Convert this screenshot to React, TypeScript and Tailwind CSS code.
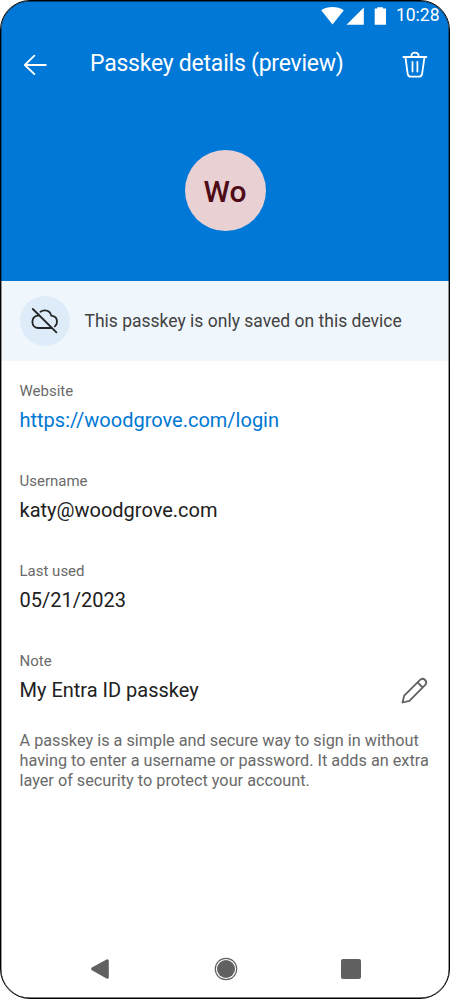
import React from "react";

function Field({ label, value, link }: { label: string; value: string; link?: boolean }) {
  return (
    <div className="h-[90px]">
      <div className="text-[15px] leading-5 text-[#6a6a6a]"><span>{label}</span></div>
      <div className={"mt-[5px] text-[20px] leading-[28px] " + (link ? "text-[#0078d4]" : "text-[#212121]")}>
        <span>{value}</span>
      </div>
    </div>
  );
}

export default function App() {
  return (
    <div className="h-[999px] w-[450px] overflow-hidden bg-white font-['Roboto',sans-serif]">
      <div className="relative flex h-[999px] w-[450px] flex-col overflow-hidden rounded-[30px] border border-black bg-white">
        <header className="h-[280px] shrink-0 bg-[#0078d7] text-white">
          <div className="flex h-[29px] items-center justify-end pr-[9.5px]">
            <svg width="66" height="20" viewBox="321 5 66 20" fill="currentColor" className="mr-[8.5px]">
              <path d="M321.2 9.2C327.5 4.9 337.5 4.9 343.8 9.2L332.5 23.6Z" />
              <path d="M363.8 6.5V23.7H346.5Z" />
              <path d="M374.7 7.6H377.4V6.2H383V7.6H386V23.8H374.7Z" />
            </svg>
            <span className="-mt-px text-[17.5px] leading-5">10:28</span>
          </div>
          <div className="flex h-[70px] items-center pl-[21px] pr-[21px]">
            <svg width="26" height="22" viewBox="22 54 26 22" fill="none" stroke="currentColor" strokeWidth="1.8" strokeLinecap="round" strokeLinejoin="round">
              <path d="M34.4 55.6L24.8 65L34.4 74.2M25 65H45.8" />
            </svg>
            <h1 className="-mt-[2px] ml-[42px] flex-1 whitespace-nowrap text-[23px] leading-7 tracking-[-0.23px]"><span>Passkey details (preview)</span></h1>
            <svg width="26" height="28" viewBox="402 51 26 28" fill="none" stroke="currentColor" strokeWidth="1.8" strokeLinecap="round" strokeLinejoin="round">
              <path d="M403.4 57H426.4M411.3 56.7C411.3 51.3 418.7 51.3 418.7 56.7M405.4 57.2L407.7 73.8Q408.1 76.7 411 76.7H418.8Q421.7 76.7 422.1 73.8L424.5 57.2M412.5 62V71.6M417.4 62V71.6" />
            </svg>
          </div>
          <div className="mx-auto mt-[50px] flex size-[81px] items-center justify-center rounded-full bg-[#e8d0d3] text-[30px] font-medium text-[#4f0c16]">
            <span className="mt-px">Wo</span>
          </div>
        </header>
        <section className="flex h-[80px] shrink-0 items-center bg-[#eff6fc] pl-[18.5px]">
          <div className="flex size-[50px] items-center justify-center rounded-full bg-[#deecf9]">
            <svg width="30" height="30" viewBox="30 306 30 30" fill="none" stroke="#242424" strokeWidth="1.8" strokeLinecap="round" strokeLinejoin="round">
              <path d="M32.8 309L56.4 332.4M37.8 315.7C34.5 316.2 32.4 318.9 32.4 322C32.4 325.5 35 328 38.4 328H51.6M54.8 326.4C56.2 325.3 57 323.7 57 321.8C57 318.4 54.6 316 51.2 315.7C50.6 312.4 48 310.3 44.7 310.3C43.1 310.3 41.7 310.8 40.5 311.7M38.7 314.2Q38.3 314.9 38.1 315.7" />
            </svg>
          </div>
          <p className="ml-[15px] whitespace-nowrap text-[17.5px] leading-6 text-[#424242]"><span>This passkey is only saved on this device</span></p>
        </section>
        <main className="flex flex-1 flex-col pl-[18.5px] pt-[20px]">
          <Field label="Website" value="https://woodgrove.com/login" link />
          <Field label="Username" value="katy@woodgrove.com" />
          <Field label="Last used" value="05/21/2023" />
          <div className="flex h-[80px] items-start justify-between">
            <Field label="Note" value="My Entra ID passkey" />
            <svg width="28" height="28" viewBox="400 676 28 28" className="mr-[21px] mt-[25px]" fill="none" stroke="#616161" strokeWidth="1.8" strokeLinecap="round" strokeLinejoin="round">
              <path d="M402.5 702.5L404.2 695.6L419.8 680.1C423.5 676.7 428.4 681.5 425 685.2L409.4 700.8ZM417.6 682.4L422.7 687.5" />
            </svg>
          </div>
          <p className="whitespace-nowrap text-[16.25px] leading-5 text-[#6a6a6a]">
            <span>A passkey is a simple and secure way to sign in without</span><br />
            <span>having to enter a username or password. It adds an extra</span><br />
            <span>layer of security to protect your account.</span>
          </p>
        </main>
        <nav className="flex h-[58px] shrink-0 items-center pl-[89px]">
          <svg width="19" height="22" viewBox="90 957.5 19 22" fill="#616161" stroke="#616161" strokeWidth="3" strokeLinejoin="round">
            <path d="M92.6 968.4L107.3 960.2V976.7Z" />
          </svg>
          <svg width="24" height="24" viewBox="0 0 24 24" className="ml-[105px]" fill="none" stroke="#616161">
            <circle cx="12" cy="12" r="10.7" strokeWidth="1.2" />
            <circle cx="12" cy="12" r="9" fill="#616161" stroke="none" />
          </svg>
          <div className="ml-[103px] size-5 rounded-[2px] bg-[#616161]" />
        </nav>
        <svg className="pointer-events-none absolute -left-px -top-px" width="450" height="999" fill="none">
          <rect x="0.7" y="0.7" width="448.6" height="997.6" rx="29.3" stroke="black" strokeWidth="1.4" />
        </svg>
      </div>
    </div>
  );
}
